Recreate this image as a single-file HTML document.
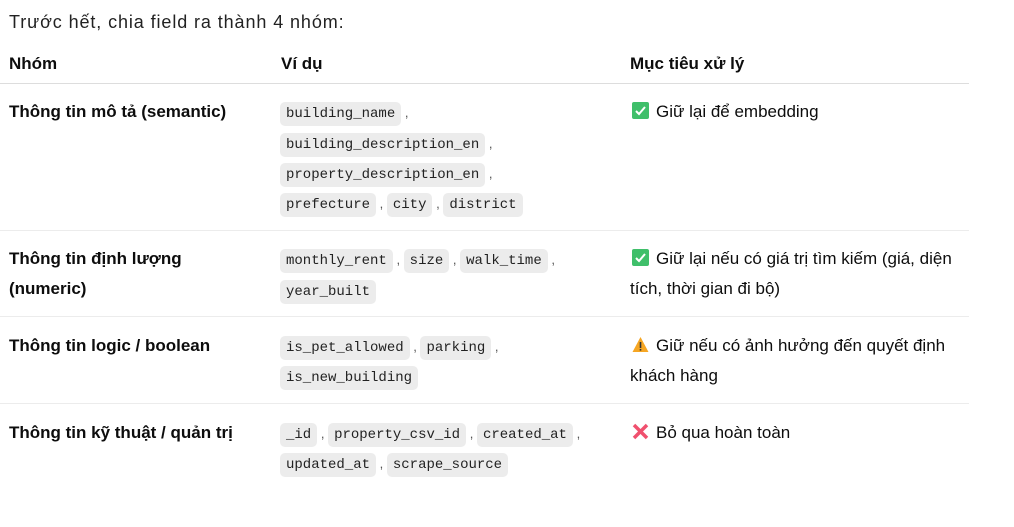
<!DOCTYPE html>
<html><head><meta charset="utf-8"><style>
body{margin:0;background:#fff;width:1014px;height:527px;overflow:hidden;font-family:"Segoe UI","Liberation Sans","DejaVu Sans",sans-serif;color:#0d0d0d;position:relative}
.t{position:absolute;font-size:17px;line-height:24px;white-space:nowrap}
.b{font-weight:bold}
.l{position:absolute;white-space:nowrap;font-size:13px;line-height:24px;left:280px;color:#555}
code{font-family:"Liberation Mono",monospace;font-size:14px;background:#ececec;border-radius:5px;padding:3px 6px;color:#222;display:inline-block;line-height:18px}
.hr{position:absolute;left:0;width:969px;height:1px;background:#ececec}
.ic{display:inline-block;width:17px;height:17px;vertical-align:-2px;margin-right:7px}
</style></head><body>
<div class="t" style="left:9px;top:10px;font-size:18px;letter-spacing:0.9px;color:#222">Trước hết, chia field ra thành 4 nhóm:</div>
<div class="t b" style="left:9px;top:52px">Nhóm</div>
<div class="t b" style="left:281px;top:52px">Ví dụ</div>
<div class="t b" style="left:630px;top:52px">Mục tiêu xử lý</div>
<div class="hr" style="top:83px;background:#ddd"></div>

<div class="t b" style="left:9px;top:100px">Thông tin mô tả (semantic)</div>
<div class="l" style="top:101px"><code>building_name</code> ,</div>
<div class="l" style="top:132px"><code>building_description_en</code> ,</div>
<div class="l" style="top:162px"><code>property_description_en</code> ,</div>
<div class="l" style="top:192px"><code>prefecture</code> , <code>city</code> , <code>district</code></div>
<div class="t" style="left:632px;top:100px"><svg class="ic" viewBox="0 0 17 17"><rect width="17" height="17" rx="2" fill="#3fbf6a"/><path d="M4 9l3 3 6-7" stroke="#fff" stroke-width="2" fill="none"/></svg>Giữ lại để embedding</div>
<div class="hr" style="top:230px"></div>

<div class="t b" style="left:9px;top:247px">Thông tin định lượng</div>
<div class="t b" style="left:9px;top:277px">(numeric)</div>
<div class="l" style="top:248px"><code>monthly_rent</code> , <code>size</code> , <code>walk_time</code> ,</div>
<div class="l" style="top:279px"><code>year_built</code></div>
<div class="t" style="left:632px;top:247px"><svg class="ic" viewBox="0 0 17 17"><rect width="17" height="17" rx="2" fill="#3fbf6a"/><path d="M4 9l3 3 6-7" stroke="#fff" stroke-width="2" fill="none"/></svg>Giữ lại nếu có giá trị tìm kiếm (giá, diện</div>
<div class="t" style="left:630px;top:277px">tích, thời gian đi bộ)</div>
<div class="hr" style="top:316px"></div>

<div class="t b" style="left:9px;top:334px">Thông tin logic / boolean</div>
<div class="l" style="top:335px"><code>is_pet_allowed</code> , <code>parking</code> ,</div>
<div class="l" style="top:365px"><code>is_new_building</code></div>
<div class="t" style="left:632px;top:334px"><svg class="ic" viewBox="0 0 17 17"><path d="M8.5 1L16.5 16H0.5Z" fill="#f6a623"/><rect x="7.7" y="6" width="1.6" height="6" fill="#333"/><rect x="7.7" y="13" width="1.6" height="1.6" fill="#333"/></svg>Giữ nếu có ảnh hưởng đến quyết định</div>
<div class="t" style="left:630px;top:364px">khách hàng</div>
<div class="hr" style="top:403px"></div>

<div class="t b" style="left:9px;top:421px">Thông tin kỹ thuật / quản trị</div>
<div class="l" style="top:422px"><code>_id</code> , <code>property_csv_id</code> , <code>created_at</code> ,</div>
<div class="l" style="top:452px"><code>updated_at</code> , <code>scrape_source</code></div>
<div class="t" style="left:632px;top:421px"><svg class="ic" viewBox="0 0 17 17"><path d="M2 2L15 15M15 2L2 15" stroke="#f0506e" stroke-width="3.5"/></svg>Bỏ qua hoàn toàn</div>
</body></html>
